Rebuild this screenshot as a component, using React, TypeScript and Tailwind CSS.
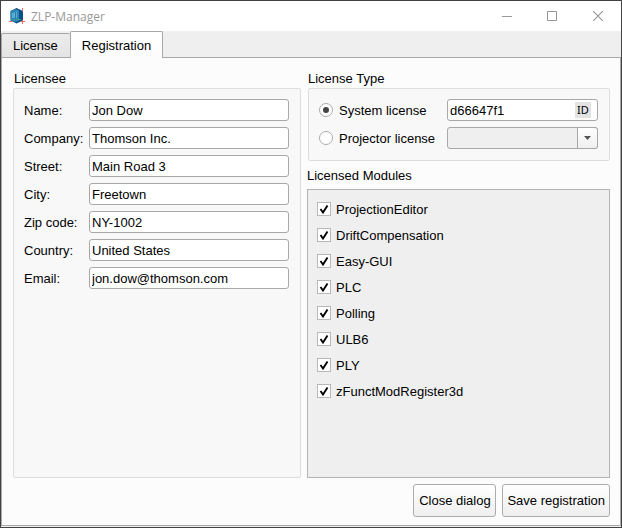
import { useState } from "react";

const licensee = [
  ["name", "Name:", "Jon Dow"],
  ["company", "Company:", "Thomson Inc."],
  ["street", "Street:", "Main Road 3"],
  ["city", "City:", "Freetown"],
  ["zip", "Zip code:", "NY-1002"],
  ["country", "Country:", "United States"],
  ["email", "Email:", "jon.dow@thomson.com"],
];

const modules = [
  "ProjectionEditor",
  "DriftCompensation",
  "Easy-GUI",
  "PLC",
  "Polling",
  "ULB6",
  "PLY",
  "zFunctModRegister3d",
];

const field =
  "h-[22px] w-full min-w-0 rounded-[3px] border border-[#a8a8a8] bg-white px-[2px] text-black outline-none";
const button =
  "h-[33px] min-w-[83px] rounded-[3px] border border-[#acacac] bg-linear-to-b from-white to-[#efefef] px-1 whitespace-nowrap";
const heading = "h-5 leading-[22px]";

function AppIcon() {
  return (
    <svg width="16" height="16" viewBox="0 0 16 16" aria-hidden="true">
      <path d="M7.500 0 14 3v9.500L7.500 15.500 1.500 12.500V3z" fill="#0b4f86" />
      <path d="M1.500 3.500 6.500 1 10 2.500V13L6 14 2 12.500z" fill="#2f86b8" />
      <path d="M3 5 8 3.500V10H3z" fill="#56add0" />
      <path d="M4 11.500h8" stroke="#469a86" />
      <path d="M6.500 3v9" stroke="#277eaf" />
      <path d="M0 13.500h3M12 13.500h4M13.500 0v3.500M13.500 12v4" stroke="#f06a6a" fill="none" />
    </svg>
  );
}

function Radio({ label, id, checked, onSelect }: { label: string; id: string; checked: boolean; onSelect: () => void }) {
  return (
    <div className="flex items-center gap-[6px]">
      <span className="grid size-[14px] place-items-center">
        <input
          type="radio"
          id={id}
          name="licenseType"
          checked={checked}
          onChange={onSelect}
          className="peer size-[14px] appearance-none rounded-full border border-[#acacac] bg-white [grid-area:1/1]"
        />
        <span className="pointer-events-none hidden size-[6px] rounded-full bg-[#444] [grid-area:1/1] peer-checked:block" />
      </span>
      <label htmlFor={id} className="whitespace-nowrap">{label}</label>
    </div>
  );
}

function ModuleCheck({ name }: { name: string }) {
  return (
    <div className="flex h-[26px] items-center gap-[5px]">
      <span className="grid size-[14px] place-items-center">
        <input
          type="checkbox"
          id={name}
          defaultChecked
          className="peer size-[14px] appearance-none border border-[#b8b8b8] bg-white [grid-area:1/1]"
        />
        <svg
          width="10"
          height="10"
          viewBox="0 0 10 10"
          aria-hidden="true"
          className="pointer-events-none hidden [grid-area:1/1] peer-checked:block"
        >
          <path d="M1.500 5 4 8.500 8.500 1.500" fill="none" stroke="#000" strokeWidth="1.900" />
        </svg>
      </span>
      <label htmlFor={name}>{name}</label>
    </div>
  );
}

export default function App() {
  const [type, setType] = useState("system");
  return (
    <main className="flex min-h-screen flex-col border border-[#434343] bg-[#efefef] font-['Liberation_Sans',Arial,sans-serif] text-[13px] leading-[21px] text-black">
      <header className="flex h-[30px] shrink-0 items-center bg-white pl-2">
        <AppIcon />
        <h1 className="ml-[6px] flex-1 font-['Open_Sans',sans-serif] text-[12px] text-[#999]">ZLP-Manager</h1>
        <div className="flex text-[#999]">
          <button aria-label="Minimize" className="grid h-[28px] w-[45px] place-items-center">
            <svg width="10" height="10" viewBox="0 0 10 10"><path d="M0 5.500h10" stroke="currentColor" /></svg>
          </button>
          <button aria-label="Maximize" className="grid h-[28px] w-[45px] place-items-center">
            <svg width="10" height="10" viewBox="0 0 10 10"><path d="M.5.5h9v9h-9z" fill="none" stroke="currentColor" /></svg>
          </button>
          <button aria-label="Close" className="grid h-[28px] w-[47px] place-items-center">
            <svg width="10" height="10" viewBox="0 0 10 10"><path d="m0 0 10 10M10 0 0 10" stroke="currentColor" strokeWidth="1.200" /></svg>
          </button>
        </div>
      </header>

      <div role="tablist" className="relative -mb-px flex h-[27px] shrink-0 items-end">
        <button
          role="tab"
          aria-selected="false"
          className="h-[25px] rounded-t-[2px] border border-r-0 border-[#a8a8a8] bg-linear-to-b from-[#ececec] to-[#e4e4e4] pr-3 pl-[11px]"
        >
          License
        </button>
        <button
          role="tab"
          aria-selected="true"
          className="h-[27px] rounded-t-[2px] border border-b-0 border-[#a8a8a8] bg-linear-to-b from-white to-[#fcfcfc] px-[11px]"
        >
          Registration
        </button>
      </div>

      <form
        role="tabpanel"
        onSubmit={(e) => e.preventDefault()}
        className="mb-px flex flex-1 flex-col border border-[#a8a8a8] bg-[#fcfcfc] pt-[10px] pr-[10px] pb-2 pl-[11px]"
      >
        <div className="grid flex-1 grid-cols-[minmax(0,288fr)_minmax(0,303fr)] gap-[6px]">
          <section className="flex flex-col">
            <h2 className={`${heading} pl-px`}>Licensee</h2>
            <div className="flex flex-1 flex-col gap-[6px] rounded-[2px] border border-[#dedede] bg-[#f8f8f8] py-[10px] pr-[11px] pl-[10px]">
              {licensee.map(([id, label, value]) => (
                <div key={id} className="grid grid-cols-[65px_minmax(0,1fr)] items-center">
                  <label htmlFor={id} className="whitespace-nowrap">{label}</label>
                  <input id={id} defaultValue={value} className={field} />
                </div>
              ))}
            </div>
          </section>

          <div className="flex flex-col">
            <section className="pl-px">
              <h2 className={heading}>License Type</h2>
              <div className="grid grid-cols-[128px_minmax(0,1fr)] items-center gap-y-[6px] rounded-[2px] border border-[#dedede] bg-[#f8f8f8] pt-[10px] pr-[11px] pb-[11px] pl-[10px]">
                <Radio id="system" label="System license" checked={type === "system"} onSelect={() => setType("system")} />
                <div className="flex h-[22px] items-center rounded-[3px] border border-[#a8a8a8] bg-white pr-[6px]">
                  <input
                    aria-label="System license ID"
                    defaultValue="d66647f1"
                    className="h-5 min-w-0 flex-1 bg-transparent px-[2px] outline-none"
                  />
                  <button
                    type="button"
                    className="h-4 w-4 bg-[#e3e3e3] text-center font-['Noto_Sans',sans-serif] text-[11px] leading-4"
                  >
                    ID
                  </button>
                </div>
                <Radio id="projector" label="Projector license" checked={type === "projector"} onSelect={() => setType("projector")} />
                <div className="relative">
                  <select
                    aria-label="Projector license"
                    disabled={type !== "projector"}
                    className="block h-[22px] w-full appearance-none rounded-[3px] border border-[#a8a8a8] bg-[#efefef] opacity-100"
                  />
                  <span className="pointer-events-none absolute inset-y-0 right-0 grid w-[21px] place-items-center rounded-r-[3px] border border-[#a8a8a8] bg-linear-to-b from-white to-[#efefef]">
                    <svg width="7" height="4" viewBox="0 0 7 4"><path d="M0 0h7L3.500 4z" fill="#555" /></svg>
                  </span>
                </div>
              </div>
            </section>
            <section className="flex flex-1 flex-col pt-1">
              <h2 className={heading}>Licensed Modules</h2>
              <div className="mt-1 flex-1 border border-[#b4b4b4] bg-[#efefef] px-[9px] py-[6px]">
                {modules.map((name) => (
                  <ModuleCheck key={name} name={name} />
                ))}
              </div>
            </section>
          </div>
        </div>
        <div className="mt-[6px] flex justify-end gap-[6px]">
          <button type="button" className={button}>Close dialog</button>
          <button type="submit" className={button}>Save registration</button>
        </div>
      </form>
    </main>
  );
}
